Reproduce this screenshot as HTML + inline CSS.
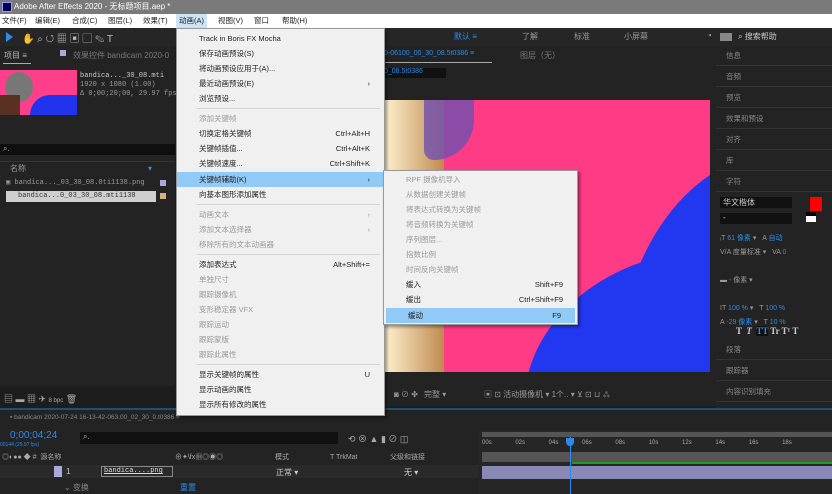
<!DOCTYPE html><html><head><meta charset="utf-8"><style>
*{margin:0;padding:0;box-sizing:border-box}
body{width:832px;height:494px;overflow:hidden;background:#1d1d1d;position:relative;font-family:"Liberation Sans","Noto Sans CJK SC",sans-serif;font-size:8px;color:#aaa}
.a{position:absolute}
.title{left:0;top:0;width:832px;height:14px;background:#7a7a7a;color:#fff;font-size:8px;line-height:14px;padding-left:14px}
.menubar{left:0;top:14px;width:832px;height:14px;background:#fff;color:#222;font-size:7.5px;line-height:14px}
.menubar span{position:absolute;top:0}
.tool{left:0;top:28px;width:832px;height:18px;background:#262626}
.menu{background:#f0f0f0;border:1px solid #999;box-shadow:2px 2px 3px rgba(0,0,0,.4);color:#222;font-size:7.5px}
.menu div{position:absolute;left:0;right:0;height:15px;line-height:15px;padding-left:22px}
.menu .g{color:#9a9a9a}
.menu .hl{background:#91c9f7}
.menu .k{position:absolute;right:14px;padding:0}
.menu .sep{height:1px;background:#d5d5d5;left:20px;right:4px;padding:0}
.rp{position:absolute;left:716px;top:0;width:116px;height:494px}
.rp div{position:absolute;left:0;width:116px;height:20px;border-bottom:1px solid #333;color:#888;font-size:7.5px;line-height:20px;padding-left:10px}
</style></head><body>
<div class="a title"><span class="a" style="left:2px;top:2px;width:10px;height:10px;background:#00005b;border:1px solid #9999ff"></span>Adobe After Effects 2020 - 无标题项目.aep *</div>
<div class="a menubar">
<span style="left:2px">文件(F)</span><span style="left:35px">编辑(E)</span><span style="left:72px">合成(C)</span><span style="left:108px">图层(L)</span><span style="left:143px">效果(T)</span><span style="left:176px;background:#cce4f7;padding:0 3px">动画(A)</span><span style="left:218px">视图(V)</span><span style="left:254px">窗口</span><span style="left:282px">帮助(H)</span></div>
<div class="a tool">
<span class="a" style="left:6px;top:4px;width:0;height:0;border-left:7px solid #2d8ceb;border-top:5px solid transparent;border-bottom:5px solid transparent"></span>
<span class="a" style="left:22px;top:2px;color:#bbb;font-size:10px">✋ ⌕ ↺ ▦ ▣ ▢ ✎ T</span></div>
<!-- left project panel -->
<div class="a" style="left:0;top:46px;width:175px;height:340px;background:#232323"></div>
<div class="a" style="left:4px;top:50px;color:#bbb;font-size:8px">项目 ≡</div>
<div class="a" style="left:3px;top:63px;width:28px;height:1px;background:#aaa"></div>
<div class="a" style="left:60px;top:50px;width:6px;height:6px;background:#aaa8dd"></div>
<div class="a" style="left:73px;top:50px;color:#777">效果控件 bandicam 2020-0</div>
<div class="a" style="left:0;top:70px;width:77px;height:45px;background:#ff3f8a;overflow:hidden"><div class="a" style="left:30px;top:25px;width:50px;height:30px;background:#2233ee;border-radius:20px 0 0 0"></div><div class="a" style="left:5px;top:2px;width:28px;height:30px;background:#777;border-radius:50%"></div><div class="a" style="left:0;top:25px;width:20px;height:20px;background:#5a3022"></div></div>
<div class="a" style="left:80px;top:72px;color:#ccc;font-family:'Liberation Mono',monospace;font-size:7px;line-height:9px">bandica..._30_08.mti<br><span style="color:#999">1920 x 1080 (1.00)<br>Δ 0;00;20;00, 29.97 fps</span></div>
<div class="a" style="left:0;top:144px;width:175px;height:11px;background:#0f0f0f;color:#aaa;padding-left:3px">⌕.</div>
<div class="a" style="left:0;top:161px;width:175px;height:13px;border-top:1px solid #333;color:#999;padding-left:10px;line-height:13px">名称<span class="a" style="left:148px;color:#2d8ceb">▾</span></div>
<div class="a" style="left:6px;top:178px;color:#999;font-family:'Liberation Mono',monospace;font-size:7px">▣ bandica..._03_30_08.0ti1138.png</div>
<div class="a" style="left:6px;top:191px;width:150px;height:11px;background:#cfcfcf;color:#333;font-family:'Liberation Mono',monospace;font-size:7px;line-height:11px;padding-left:12px">bandica...0_03_30_08.mti1138</div>
<div class="a" style="left:160px;top:180px;width:6px;height:6px;background:#aaa8dd"></div>
<div class="a" style="left:160px;top:193px;width:6px;height:6px;background:#d8b27a"></div>
<div class="a" style="left:0;top:392px;width:175px;height:14px;color:#aaa;padding-left:4px;font-size:9px">▤ ▬ ▦ ✈ <span style="font-size:6px">8 bpc</span> 🗑</div>
<!-- comp viewer -->
<div class="a" style="left:384px;top:46px;width:332px;height:338px;background:#232323"></div>
<div class="a" style="left:384px;top:28px;width:332px;height:18px;background:#262626;color:#999;line-height:18px"><span class="a" style="left:70px;color:#2d8ceb">默认 ≡</span><span class="a" style="left:138px">了解</span><span class="a" style="left:190px">标准</span><span class="a" style="left:240px">小屏幕</span></div>
<div class="a" style="left:384px;top:50px;color:#2d8ceb;font-size:7px">0-06100_00_30_08.5t0386 ≡</div>
<div class="a" style="left:384px;top:62px;width:108px;height:1px;background:#aaa"></div>
<div class="a" style="left:520px;top:50px;color:#777">图层（无）</div>
<div class="a" style="left:384px;top:68px;width:62px;height:10px;background:#111;color:#2d8ceb;font-size:7px">0_08.5t0386</div>
<div class="a" style="left:384px;top:100px;width:326px;height:272px;background:#ff3b86;overflow:hidden">
<div class="a" style="left:0;top:0;width:60px;height:272px;background:linear-gradient(90deg,#fff2d0,#c08a50)"></div>
<div class="a" style="left:40px;top:0;width:50px;height:60px;background:#7050b0;border-radius:0 0 40px 10px;opacity:.8"></div>
<div class="a" style="left:140px;top:150px;width:320px;height:260px;background:#2238f0;border-radius:60% 0 0 0"></div>
<div class="a" style="left:230px;top:55px;width:200px;height:300px;background:#2238f0;border-radius:80% 0 0 0"></div>
</div>
<div class="a" style="left:384px;top:384px;width:332px;height:22px;background:#232323;color:#999;line-height:22px;font-size:8px"><span class="a" style="left:10px">◙ ⊘ ✤</span><span class="a" style="left:40px">完整 ▾</span><span class="a" style="left:100px">▣ ⊡ 活动摄像机 ▾ 1个.. ▾ ⊻ ⊡ ⊔ ⁂</span></div>
<!-- right panel -->
<div class="a" style="left:716px;top:28px;width:116px;height:380px;background:#232323"></div>
<div class="a" style="left:716px;top:28px;width:116px;height:18px;background:#262626"><span class="a" style="left:-8px;top:3px;color:#999">⁍</span><span class="a" style="left:4px;top:5px;width:12px;height:8px;background:#888"></span><span class="a" style="left:22px;top:3px;color:#ccc">⌕ 搜索帮助</span></div>
<div class="rp">
<div style="top:46px">信息</div><div style="top:67px">音频</div><div style="top:88px">预览</div><div style="top:109px">效果和预设</div><div style="top:130px">对齐</div><div style="top:151px">库</div><div style="top:172px">字符</div>
<div style="top:340px">段落</div><div style="top:361px">跟踪器</div><div style="top:382px">内容识别填充</div></div>
<div class="a" style="left:720px;top:197px;width:72px;height:11px;background:#111;color:#ccc;padding-left:3px">华文楷体</div>
<div class="a" style="left:720px;top:213px;width:72px;height:11px;background:#111;color:#ccc;padding-left:3px">-</div>
<div class="a" style="left:810px;top:197px;width:12px;height:14px;background:#f00"></div>
<div class="a" style="left:806px;top:212px;width:10px;height:10px;background:#fff;border-top:4px solid #000"></div>
<div class="a" style="left:720px;top:232px;color:#999;line-height:14px;font-size:7px">ᵢT <span style="color:#2d8ceb">61 像素</span> ▾ &nbsp;&nbsp;A <span style="color:#2d8ceb">自动</span><br>V/A 度量标准 ▾ &nbsp;&nbsp;VA <span style="color:#2d8ceb">0</span><br><br>▬ <span style="color:#2d8ceb">-</span> 像素 ▾<br><br>IT <span style="color:#2d8ceb">100 %</span> ▾ &nbsp;&nbsp;T <span style="color:#2d8ceb">100 %</span><br>A <span style="color:#2d8ceb">-29 像素</span> ▾ &nbsp;&nbsp;T <span style="color:#2d8ceb">10 %</span></div>
<div class="a" style="left:736px;top:326px;color:#ccc;font-family:'Liberation Serif',serif;font-size:9px;font-weight:bold">T &nbsp;<i>T</i> &nbsp;<span style="color:#2d8ceb;background:#111">TT</span> Tr T¹ T</div>
<!-- timeline -->
<div class="a" style="left:0;top:408px;width:832px;height:2px;background:#1f4e7a"></div>
<div class="a" style="left:0;top:410px;width:832px;height:84px;background:#232323"></div>
<div class="a" style="left:10px;top:414px;color:#888;font-size:6.5px">▪ bandicam 2020-07-24 16-13-42-063.00_02_30_0.t0386 ≡</div>
<div class="a" style="left:10px;top:430px;color:#2d8ceb;font-size:10px">0;00;04;24</div>
<div class="a" style="left:0;top:442px;color:#2d8ceb;font-size:5px">00144 (29.97 fps)</div>
<div class="a" style="left:80px;top:432px;width:258px;height:12px;background:#111;color:#aaa;padding-left:3px">⌕.</div>
<div class="a" style="left:348px;top:432px;color:#aaa;font-size:9px">⟲ ⊗ ▲ ▮ ⊘ ◫</div>
<div class="a" style="left:0;top:452px;width:478px;height:12px;color:#aaa;font-size:7px;line-height:12px;padding-left:2px">◎◐●● ◆ # &nbsp;源名称 <span class="a" style="left:175px">⊕✦\fx▦◎◉◎</span><span class="a" style="left:275px">模式</span><span class="a" style="left:330px">T TrkMat</span><span class="a" style="left:390px">父级和链接</span></div>
<div class="a" style="left:0;top:465px;width:478px;height:13px;background:#2a2a2a"></div>
<div class="a" style="left:54px;top:466px;width:8px;height:11px;background:#aaa8dd"></div>
<div class="a" style="left:66px;top:467px;color:#ccc">1</div>
<div class="a" style="left:101px;top:466px;width:72px;height:11px;border:1px solid #888;color:#ddd;font-family:'Liberation Mono',monospace;font-size:7px;padding-left:2px;text-decoration:underline">bandica....png</div>
<div class="a" style="left:276px;top:467px;color:#ccc">正常 ▾</div>
<div class="a" style="left:404px;top:467px;color:#ccc">无 ▾</div>
<div class="a" style="left:64px;top:482px;color:#888">⌄ 变换</div>
<div class="a" style="left:180px;top:482px;color:#2d8ceb">重置</div>
<div class="a" style="left:478px;top:430px;width:354px;height:64px;background:#262626"></div>
<div class="a" style="left:482px;top:432px;width:350px;height:5px;background:#555"></div>
<div class="a" style="left:482px;top:440px;color:#aaa;font-size:6px;word-spacing:22px">00s 02s 04s 06s 08s 10s 12s 14s 16s 18s</div>
<div class="a" style="left:482px;top:452px;width:350px;height:10px;background:#555"></div>
<div class="a" style="left:572px;top:462px;width:260px;height:2px;background:#1ea01e"></div>
<div class="a" style="left:482px;top:466px;width:350px;height:13px;background:#8a88b4"></div>
<div class="a" style="left:570px;top:437px;width:1px;height:57px;background:#2d8ceb"></div>
<div class="a" style="left:566px;top:438px;width:8px;height:8px;background:#2d8ceb;border-radius:0 0 4px 4px"></div>
<!-- main menu -->
<div class="a menu" style="left:176px;top:28px;width:209px;height:388px">
<div style="top:2px">Track in Boris FX Mocha</div>
<div style="top:17px">保存动画预设(S)</div>
<div style="top:32px">将动画预设应用于(A)...</div>
<div style="top:47px">最近动画预设(E)<span class="k">›</span></div>
<div style="top:62px">浏览预设...</div>
<div class="sep" style="top:79px"></div>
<div class="g" style="top:82px">添加关键帧</div>
<div style="top:97px">切换定格关键帧<span class="k">Ctrl+Alt+H</span></div>
<div style="top:112px">关键帧插值...<span class="k">Ctrl+Alt+K</span></div>
<div style="top:127px">关键帧速度...<span class="k">Ctrl+Shift+K</span></div>
<div class="hl" style="top:143px">关键帧辅助(K)<span class="k">›</span></div>
<div style="top:158px">向基本图形添加属性</div>
<div class="sep" style="top:175px"></div>
<div class="g" style="top:178px">动画文本<span class="k">›</span></div>
<div class="g" style="top:193px">添加文本选择器<span class="k">›</span></div>
<div class="g" style="top:208px">移除所有的文本动画器</div>
<div class="sep" style="top:225px"></div>
<div style="top:228px">添加表达式<span class="k">Alt+Shift+=</span></div>
<div class="g" style="top:243px">单独尺寸</div>
<div class="g" style="top:258px">跟踪摄像机</div>
<div class="g" style="top:273px">变形稳定器 VFX</div>
<div class="g" style="top:288px">跟踪运动</div>
<div class="g" style="top:303px">跟踪蒙版</div>
<div class="g" style="top:318px">跟踪此属性</div>
<div class="sep" style="top:335px"></div>
<div style="top:338px">显示关键帧的属性<span class="k">U</span></div>
<div style="top:353px">显示动画的属性</div>
<div style="top:368px">显示所有修改的属性</div>
</div>
<!-- submenu -->
<div class="a menu" style="left:383px;top:170px;width:195px;height:155px">
<div class="g" style="top:1px">RPF 摄像机导入</div>
<div class="g" style="top:16px">从数据创建关键帧</div>
<div class="g" style="top:31px">将表达式转换为关键帧</div>
<div class="g" style="top:46px">将音频转换为关键帧</div>
<div class="g" style="top:61px">序列图层...</div>
<div class="g" style="top:76px">指数比例</div>
<div class="g" style="top:91px">时间反向关键帧</div>
<div style="top:106px">缓入<span class="k">Shift+F9</span></div>
<div style="top:121px">缓出<span class="k">Ctrl+Shift+F9</span></div>
<div class="hl" style="top:137px;left:2px;right:2px">缓动<span class="k">F9</span></div>
</div>
</body></html>
